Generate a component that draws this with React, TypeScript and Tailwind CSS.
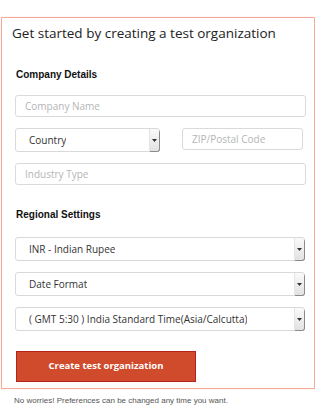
const SelectBox = ({ label, className }: { label: string; className: string }) => (
  <div
    className={`flex items-center justify-between rounded-[3px] border border-[#d9d9d9] bg-white pl-[13px] text-[10px] text-[#333] ${className}`}
  >
    <span className="truncate">{label}</span>
    <span className="flex h-full w-[10px] items-center justify-center rounded-r-[3px] border-l border-[#e4e4e4] bg-gradient-to-b from-[#fafafa] to-[#e2e2e2] shadow-[1px_1px_0_#8a8a8a]">
      <svg width="5" height="3" viewBox="0 0 5 3">
        <path d="M0 0h5L2.5 3z" fill="#333" />
      </svg>
    </span>
  </div>
);

const TextBox = ({ placeholder, className }: { placeholder: string; className: string }) => (
  <div
    className={`flex items-center rounded-[3px] border border-[#dadada] bg-white pl-[9px] text-[10px] text-[#b5b5b5] ${className}`}
  >
    {placeholder}
  </div>
);

export default function App() {
  return (
    <div className="h-[411px] w-[315px] bg-white pt-[17px] font-['Open_Sans',sans-serif]">
      {/* Card */}
      <div className="ml-[1px] h-[372px] w-[314px] border border-[#f6aa9c] shadow-[0_0_1px_#fbd0c8]">
        <h1 className="ml-[10px] mt-[5px] text-[13.5px] leading-[20px] text-[#222]">
          Get started by creating a test organization
        </h1>

        <h2 className="ml-[14px] mt-[25px] font-['Liberation_Sans',sans-serif] text-[10px] font-bold leading-[14px] text-[#111]">
          Company Details
        </h2>
        <TextBox placeholder="Company Name" className="ml-[13px] mt-[13px] h-[22px] w-[291px]" />
        <div className="ml-[13px] mt-[11px] flex items-start">
          <SelectBox label="Country" className="h-[24px] w-[145px]" />
          <TextBox placeholder="ZIP/Postal Code" className="ml-[22px] h-[22px] w-[121px]" />
        </div>
        <TextBox placeholder="Industry Type" className="ml-[13px] mt-[11px] h-[22px] w-[291px]" />

        <h2 className="ml-[14px] mt-[23px] font-['Liberation_Sans',sans-serif] text-[10px] font-bold leading-[14px] text-[#111]">
          Regional Settings
        </h2>
        <div className="ml-[13px] mt-[15px] flex flex-col gap-[11px]">
          <SelectBox label="INR - Indian Rupee" className="h-[24px] w-[290px]" />
          <SelectBox label="Date Format" className="h-[24px] w-[290px]" />
          <SelectBox label="( GMT 5:30 ) India Standard Time(Asia/Calcutta)" className="h-[24px] w-[290px]" />
        </div>

        <button className="ml-[14px] mt-[20px] h-[31px] w-[180px] border border-[#b5231a] bg-[#d04b2b] text-[9.5px] font-bold text-white">
          Create test organization
        </button>
      </div>

      <p className="ml-[14px] mt-[6px] font-['Liberation_Sans',sans-serif] text-[8px] text-[#555]">
        No worries! Preferences can be changed any time you want.
      </p>
    </div>
  );
}
